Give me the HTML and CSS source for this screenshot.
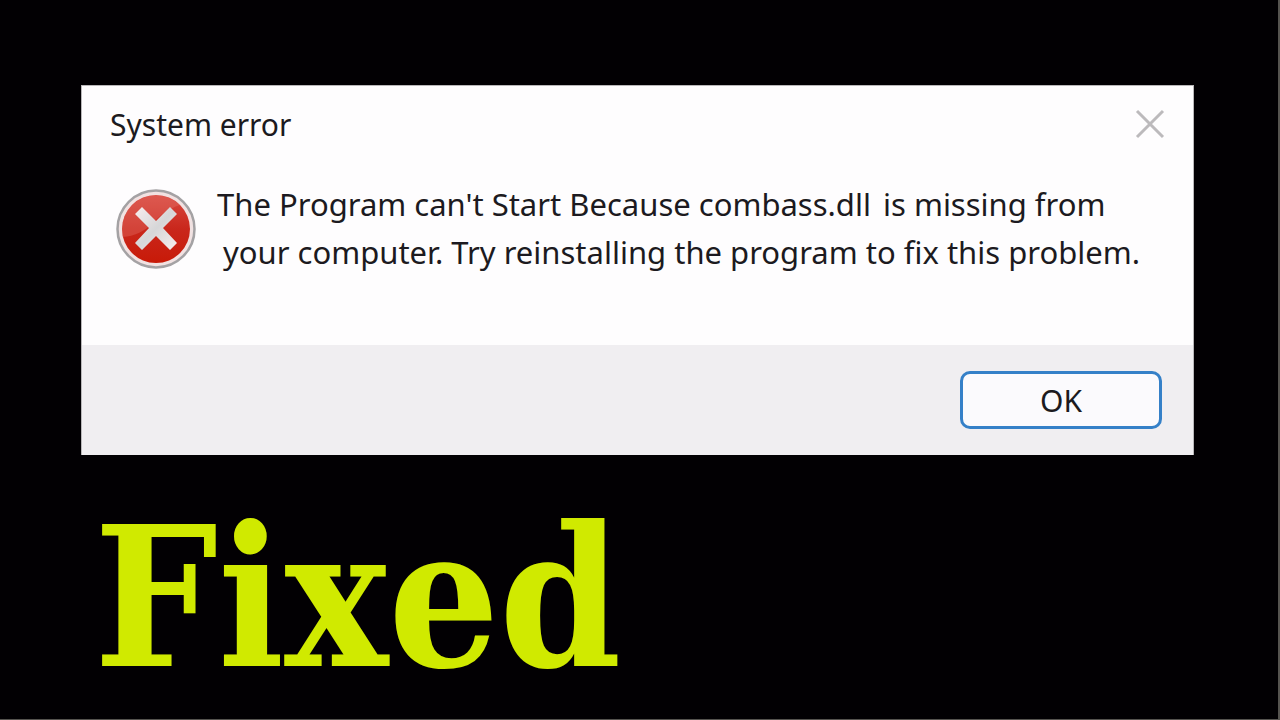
FILE: index.html
```html
<!DOCTYPE html>
<html lang="en">
<head>
    <meta charset="UTF-8">
    <meta name="viewport" content="width=device-width, initial-scale=1.0">
    <title>System error</title>
    <link rel="stylesheet" href="styles.css">
</head>
<body>
    <!-- Error dialog -->
    <section class="dialog" role="alertdialog" aria-labelledby="dialogTitle" aria-describedby="dialogText">
        <div class="titlebar">
            <h2 id="dialogTitle">System error</h2>
            <button type="button" class="close" aria-label="Close">
                <svg width="30" height="30" viewBox="0 0 30 30">
                    <path d="M2 2 L28 28 M28 2 L2 28" fill="none" stroke="#bcbabc" stroke-width="3"/>
                </svg>
            </button>
        </div>

        <div class="message">
            <svg class="error-icon" width="80" height="80" viewBox="0 0 80 80">
                <defs>
                    <linearGradient id="red" x1="0" y1="0" x2="0" y2="1">
                        <stop offset="0" stop-color="#d9483f"/>
                        <stop offset="0.5" stop-color="#c9271c"/>
                        <stop offset="1" stop-color="#c81a08"/>
                    </linearGradient>
                    <linearGradient id="cross" x1="0" y1="0" x2="1" y2="1">
                        <stop offset="0" stop-color="#f8eeee"/>
                        <stop offset="0.5" stop-color="#d6d6d8"/>
                        <stop offset="1" stop-color="#f8eeee"/>
                    </linearGradient>
                </defs>
                <circle cx="40" cy="40" r="38.5" fill="#f1e2e2" stroke="#a4a2a4" stroke-width="2.5"/>
                <circle cx="40" cy="40" r="34" fill="url(#red)"/>
                <path d="M7 48 A34 34 0 0 1 64 16 C52 20 44 26 37 34 C28 43 18 47 7 48 Z" fill="#e4796f" opacity="0.35"/>
                <path d="M26 18 L40 32 L54 18 L61 25 L47 39 L61 54 L54 61 L40 47 L26 61 L19 54 L33 39 L19 25 Z" fill="url(#cross)"/>
            </svg>
            <p id="dialogText">The Program can't Start Because combass.dll <span class="gap">is missing from</span><br>
                <span class="second-line">your computer. Try reinstalling the program to fix this problem.</span></p>
        </div>

        <div class="actions">
            <button type="button" class="ok">OK</button>
        </div>
    </section>

    <h1>Fixed</h1>
</body>
</html>
```

FILE: styles.css
```css
* {
    box-sizing: border-box;
}

body {
    margin: 0;
    min-height: 100vh;
    padding: 85px 84px 0 81px;
    background-color: #020003;
    border-right: 2px solid #55534f;
    border-bottom: 1px solid #55534f;
    font-family: "Noto Sans", "Open Sans", sans-serif;
    color: #1c1a20;
}

/* white dialog box */
.dialog {
    background-color: #fefdfe;
    border: 1px solid #b9b7b9;
    border-bottom: none;
}

.titlebar {
    display: flex;
    justify-content: space-between;
    align-items: center;
    height: 76px;
    padding: 0 28px;
}

h2 {
    margin: 0;
    font-size: 30px;
    font-weight: 400;
}

.close {
    display: flex;
    padding: 0;
    border: none;
    background: none;
    cursor: pointer;
}

.message {
    display: flex;
    gap: 21px;
    height: 183px;
    padding: 18px 0 0 34px;
}

.error-icon {
    flex: none;
    margin-top: 9px;
}

.message p {
    margin: 0;
    font-size: 31px;
    line-height: 48px;
    white-space: nowrap;
}

.gap {
    padding-left: 4px;
}

.second-line {
    padding-left: 6px;
}

/* grey footer with the button */
.actions {
    display: flex;
    justify-content: flex-end;
    align-items: center;
    height: 110px;
    padding-right: 31px;
    background-color: #f0eef1;
}

.ok {
    width: 202px;
    height: 58px;
    border: 3px solid #3580c8;
    border-radius: 10px;
    background-color: #fbfafd;
    color: #1c1a20;
    font-family: inherit;
    font-size: 30px;
    cursor: pointer;
}

h1 {
    margin: 43px 0 0 13px;
    color: #d0ea00;
    font-family: "DejaVu Serif Condensed", "DejaVu Serif", serif;
    font-size: 194px;
    font-weight: 700;
    line-height: 200px;
}
```
